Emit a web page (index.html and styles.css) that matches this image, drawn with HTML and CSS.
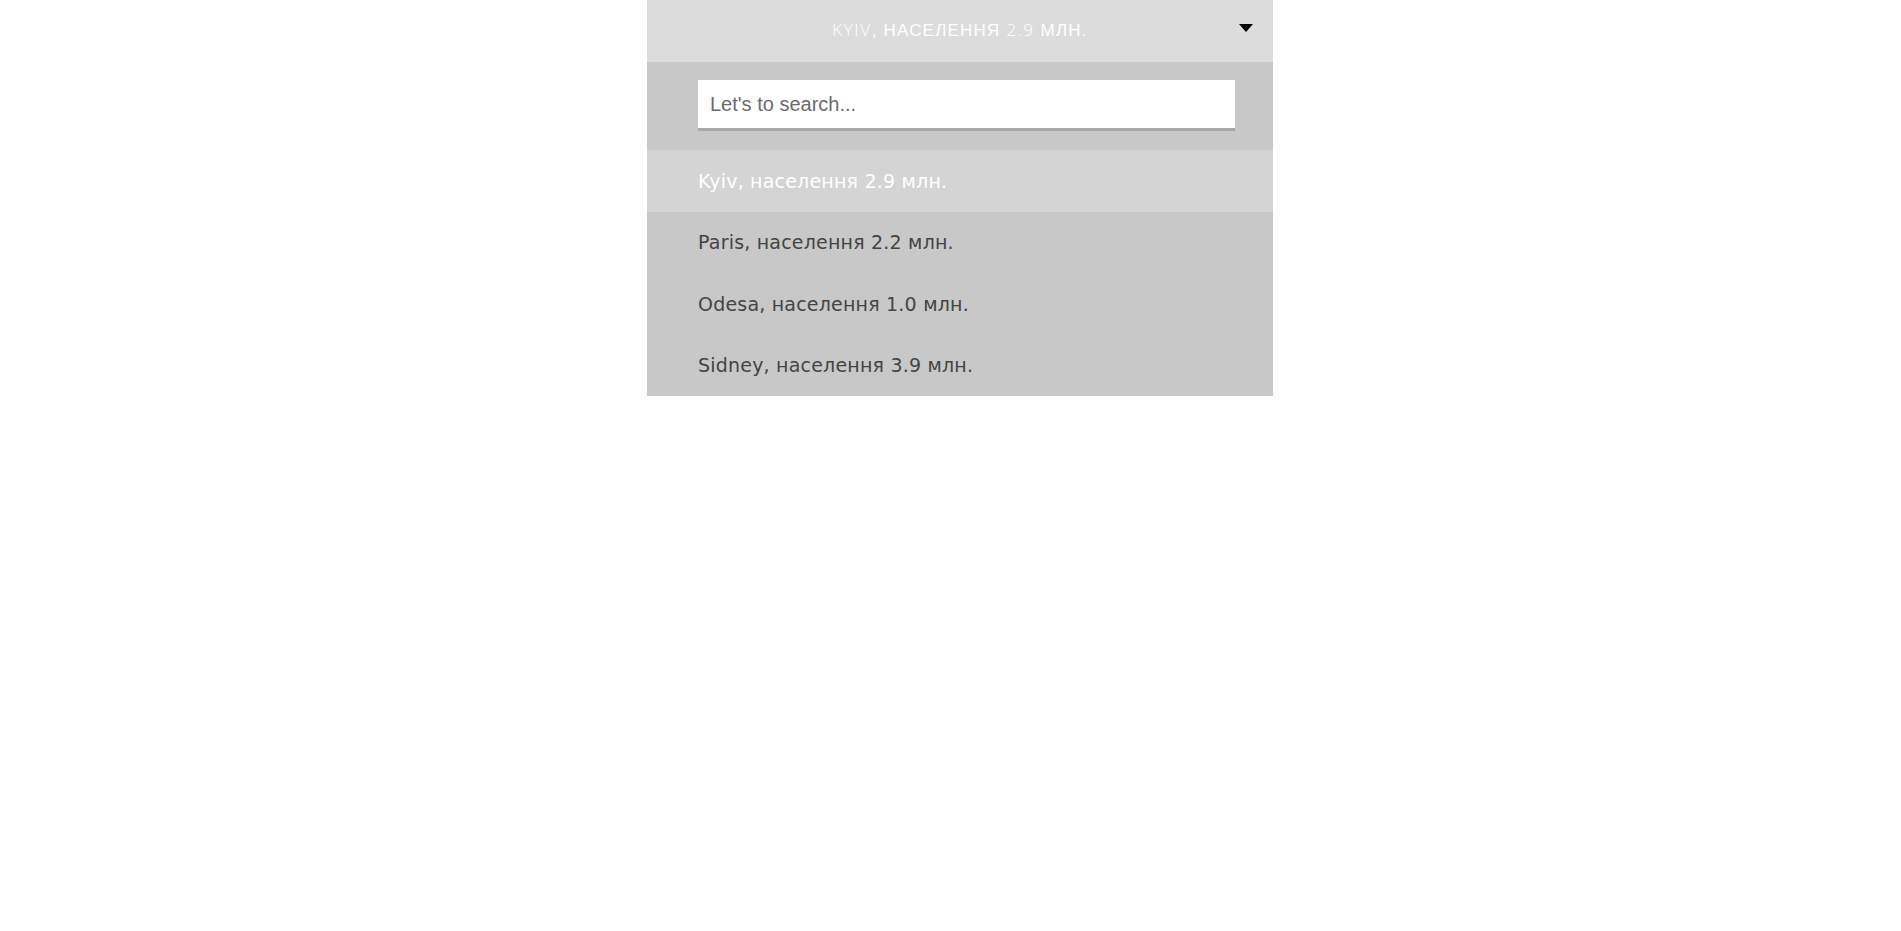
FILE: index.html
```html
<!DOCTYPE html>
<html lang="uk">
<head>
<meta charset="utf-8">
<title>Select</title>
<link rel="stylesheet" href="styles.css">
</head>
<body>
<div class="select">
  <div class="select-head">
    <span class="head-text"><span class="lat">Kyiv</span>, населення <span class="lat">2.9</span> млн.</span>
    <span class="arrow"></span>
  </div>
  <div class="search-box">
    <input class="search" type="text" placeholder="Let's to search...">
  </div>
  <ul class="options">
    <li class="option active">Kyiv, населення 2.9 млн.</li>
    <li class="option">Paris, населення 2.2 млн.</li>
    <li class="option">Odesa, населення 1.0 млн.</li>
    <li class="option">Sidney, населення 3.9 млн.</li>
  </ul>
</div>
</body>
</html>
```
FILE: styles.css
```css
html, body {
  margin: 0;
  padding: 0;
  background: #fefefe;
}
body {
  display: flex;
  justify-content: center;
  padding-left: 19px;
}
.select {
  width: 626px;
  background: #c8c8c8;
}
.select-head {
  position: relative;
  box-sizing: border-box;
  height: 62px;
  padding-bottom: 4px;
  background: #dcdcdc;
  display: flex;
  align-items: center;
  justify-content: center;
}
.head-text {
  color: #ffffff;
  text-transform: uppercase;
  font-family: "Liberation Sans", Arial, sans-serif;
  font-size: 17px;
  letter-spacing: 1.2px;
}
.head-text .lat {
  font-family: "Open Sans", sans-serif;
  font-weight: 300;
  font-size: 17px;
  letter-spacing: 1.6px;
}
.arrow {
  position: absolute;
  right: 20px;
  top: 24px;
  width: 0;
  height: 0;
  border-left: 7.5px solid transparent;
  border-right: 7.5px solid transparent;
  border-top: 8px solid #000;
}
.search-box {
  padding: 18px 38px 19px 51px;
}
.search {
  display: block;
  box-sizing: border-box;
  width: 537px;
  height: 51px;
  margin: 0;
  padding: 0 12px;
  border: none;
  border-bottom: 3px solid #a8a8a8;
  background: #fff;
  outline: none;
  font-family: "Liberation Sans", Arial, sans-serif;
  font-size: 20px;
  color: #333;
}
.search::placeholder {
  color: #6b6b6b;
}
.options {
  list-style: none;
  margin: 0;
  padding: 0;
}
.option {
  height: 61.5px;
  display: flex;
  align-items: center;
  padding-left: 51px;
  font-family: "DejaVu Sans", sans-serif;
  font-size: 19px;
  color: #444;
  letter-spacing: 0.2px;
}
.option.active {
  background: #d4d4d4;
  color: #fff;
}
```
